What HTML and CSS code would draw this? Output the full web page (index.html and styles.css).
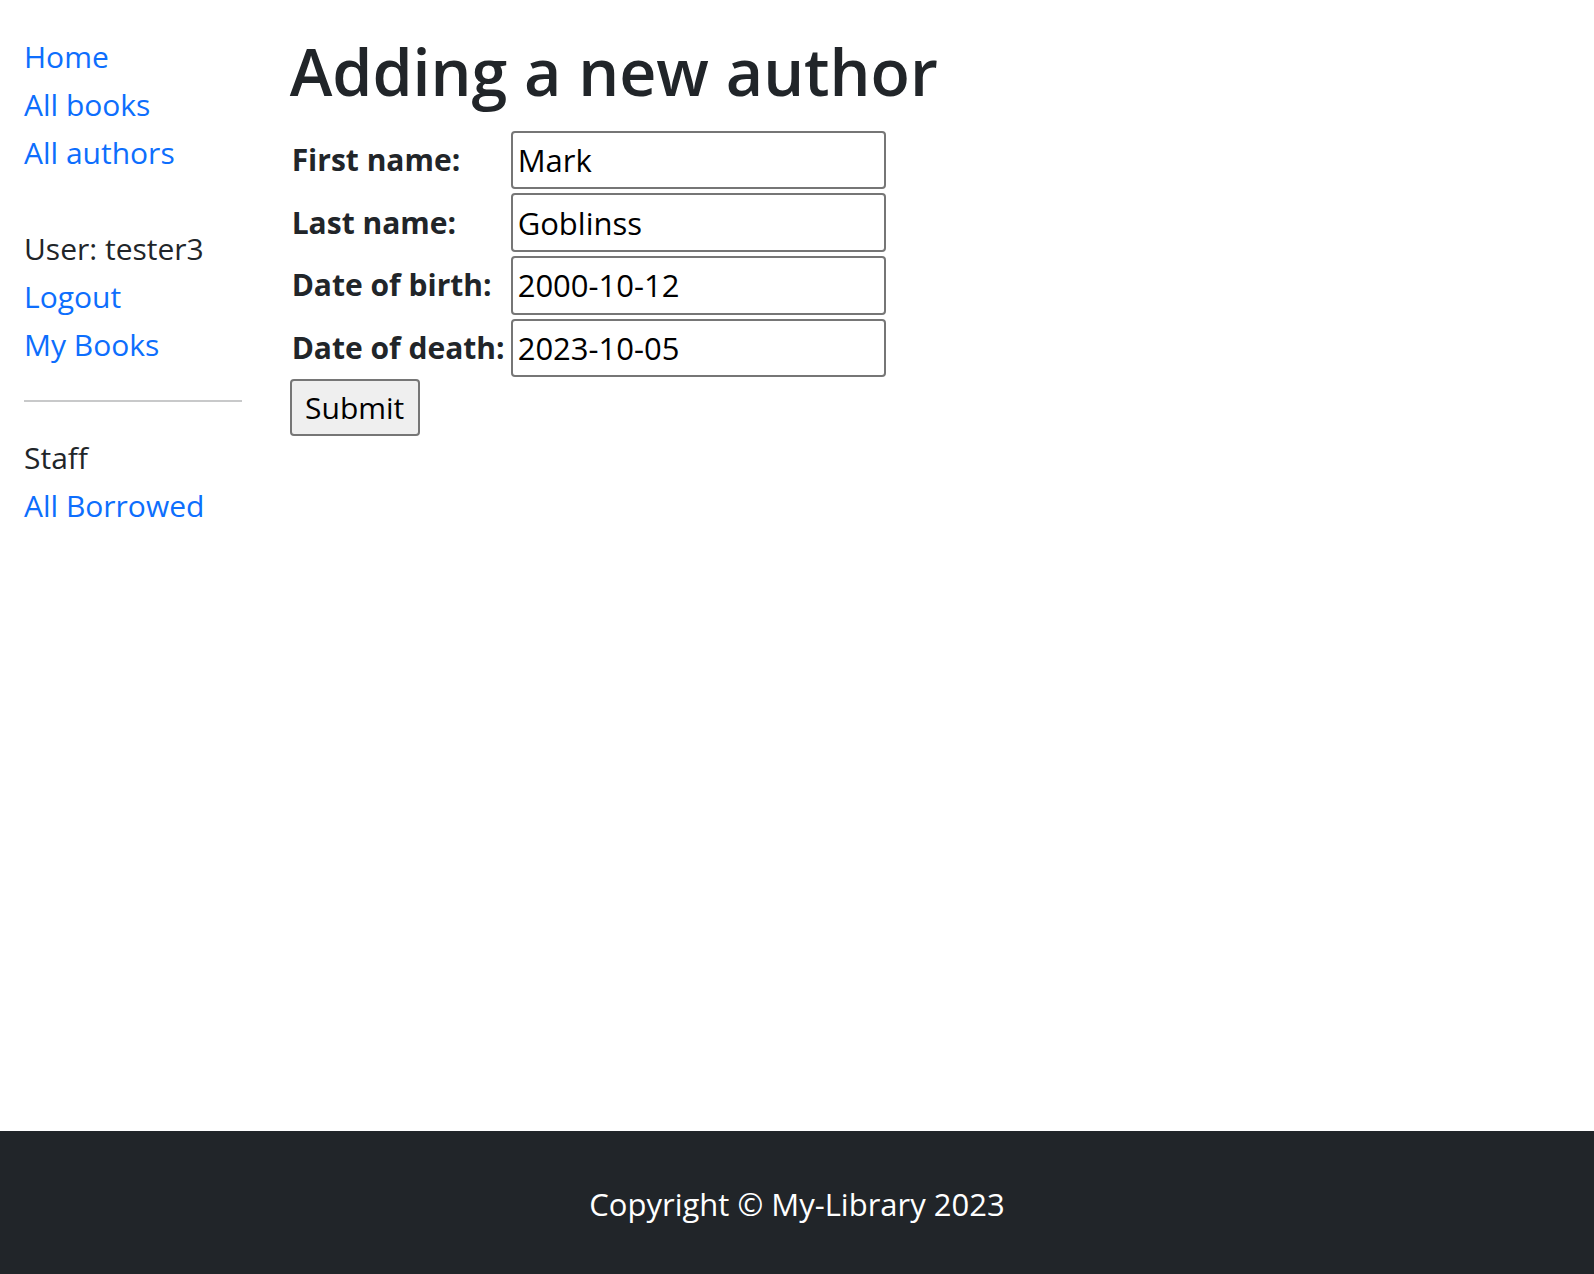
FILE: index.html
```html
<!DOCTYPE html>
<html lang="en">
<head>
<meta charset="utf-8">
<title>Local Library</title>
<link rel="stylesheet" href="styles.css">
</head>
<body>
<div class="page">
  <div class="row">
    <aside class="sidebar">
      <ul class="nav nav-main">
        <li><a href="#">Home</a></li>
        <li><a href="#">All books</a></li>
        <li><a href="#">All authors</a></li>
      </ul>
      <ul class="nav nav-user">
        <li>User: tester3</li>
        <li><a href="#">Logout</a></li>
        <li><a href="#">My Books</a></li>
      </ul>
      <hr class="divider">
      <ul class="nav nav-staff">
        <li>Staff</li>
        <li><a href="#">All Borrowed</a></li>
      </ul>
    </aside>
    <main class="content">
      <h1 class="title">Adding a new author</h1>
      <form class="author-form" action="#" method="post">
        <table class="form-table">
          <tr>
            <th><label for="id_first_name">First name:</label></th>
            <td><input class="field" type="text" id="id_first_name" value="Mark"></td>
          </tr>
          <tr>
            <th><label for="id_last_name">Last name:</label></th>
            <td><input class="field" type="text" id="id_last_name" value="Goblinss"></td>
          </tr>
          <tr>
            <th><label for="id_dob">Date of birth:</label></th>
            <td><input class="field" type="text" id="id_dob" value="2000-10-12"></td>
          </tr>
          <tr>
            <th><label for="id_dod">Date of death:</label></th>
            <td><input class="field" type="text" id="id_dod" value="2023-10-05"></td>
          </tr>
        </table>
        <div class="actions"><input class="submit" type="submit" value="Submit"></div>
      </form>
    </main>
  </div>
</div>
<footer class="footer">
  <p class="copyright">Copyright © My-Library 2023</p>
</footer>
</body>
</html>
```

FILE: styles.css
```css
* { box-sizing: border-box; }

html, body { margin: 0; padding: 0; }

body {
  font-family: "Open Sans", "Noto Sans", "DejaVu Sans", sans-serif;
  font-size: 30px;
  line-height: 48px;
  color: #212529;
  background: #fff;
  min-height: 100vh;
  display: flex;
  flex-direction: column;
}

a { color: #0d6efd; text-decoration: none; }

.page { flex: 1; }

.row { display: flex; }

.sidebar {
  width: 16.6667%;
  flex: none;
  padding: 0 24px;
}

.nav {
  list-style: none;
  margin: 0;
  padding: 0;
}

.nav-main { margin-top: 33px; }
.nav-user { margin-top: 48px; }

.divider {
  margin: 31px 0 32px;
  border: 0;
  border-top: 2px solid #c8c9ca;
  height: 0;
}

.content {
  flex: 1;
  padding: 31px 24px 0;
}

.title {
  margin: 0 0 16px;
  font-size: 64.5px;
  line-height: 81.6px;
  font-weight: 600;
}

.author-form { margin: 0; }

.form-table {
  border-collapse: collapse;
}

.form-table th {
  padding: 2px;
  text-align: left;
  font-size: 30px;
  font-weight: 700;
  white-space: nowrap;
  vertical-align: middle;
  width: 219px;
}

.form-table td {
  padding: 2px;
  vertical-align: middle;
}

.field {
  display: block;
  width: 375px;
  height: 58.67px;
  padding: 2px 5px;
  border: 2px solid #767676;
  border-radius: 4px;
  font: inherit;
  font-size: 31px;
  line-height: 48px;
  color: #000;
  background: #fff;
}

.actions { display: flex; }

.submit {
  width: 130px;
  height: 56.67px;
  padding: 2px 12px;
  border: 2px solid #767676;
  border-radius: 4px;
  background: #efefef;
  font: inherit;
  font-size: 30px;
  line-height: 48px;
  color: #000;
}

.footer {
  background: #212529;
  color: #fff;
  text-align: center;
  padding: 49px 0 46px;
}

.copyright { margin: 0; font-size: 31px; }
```
